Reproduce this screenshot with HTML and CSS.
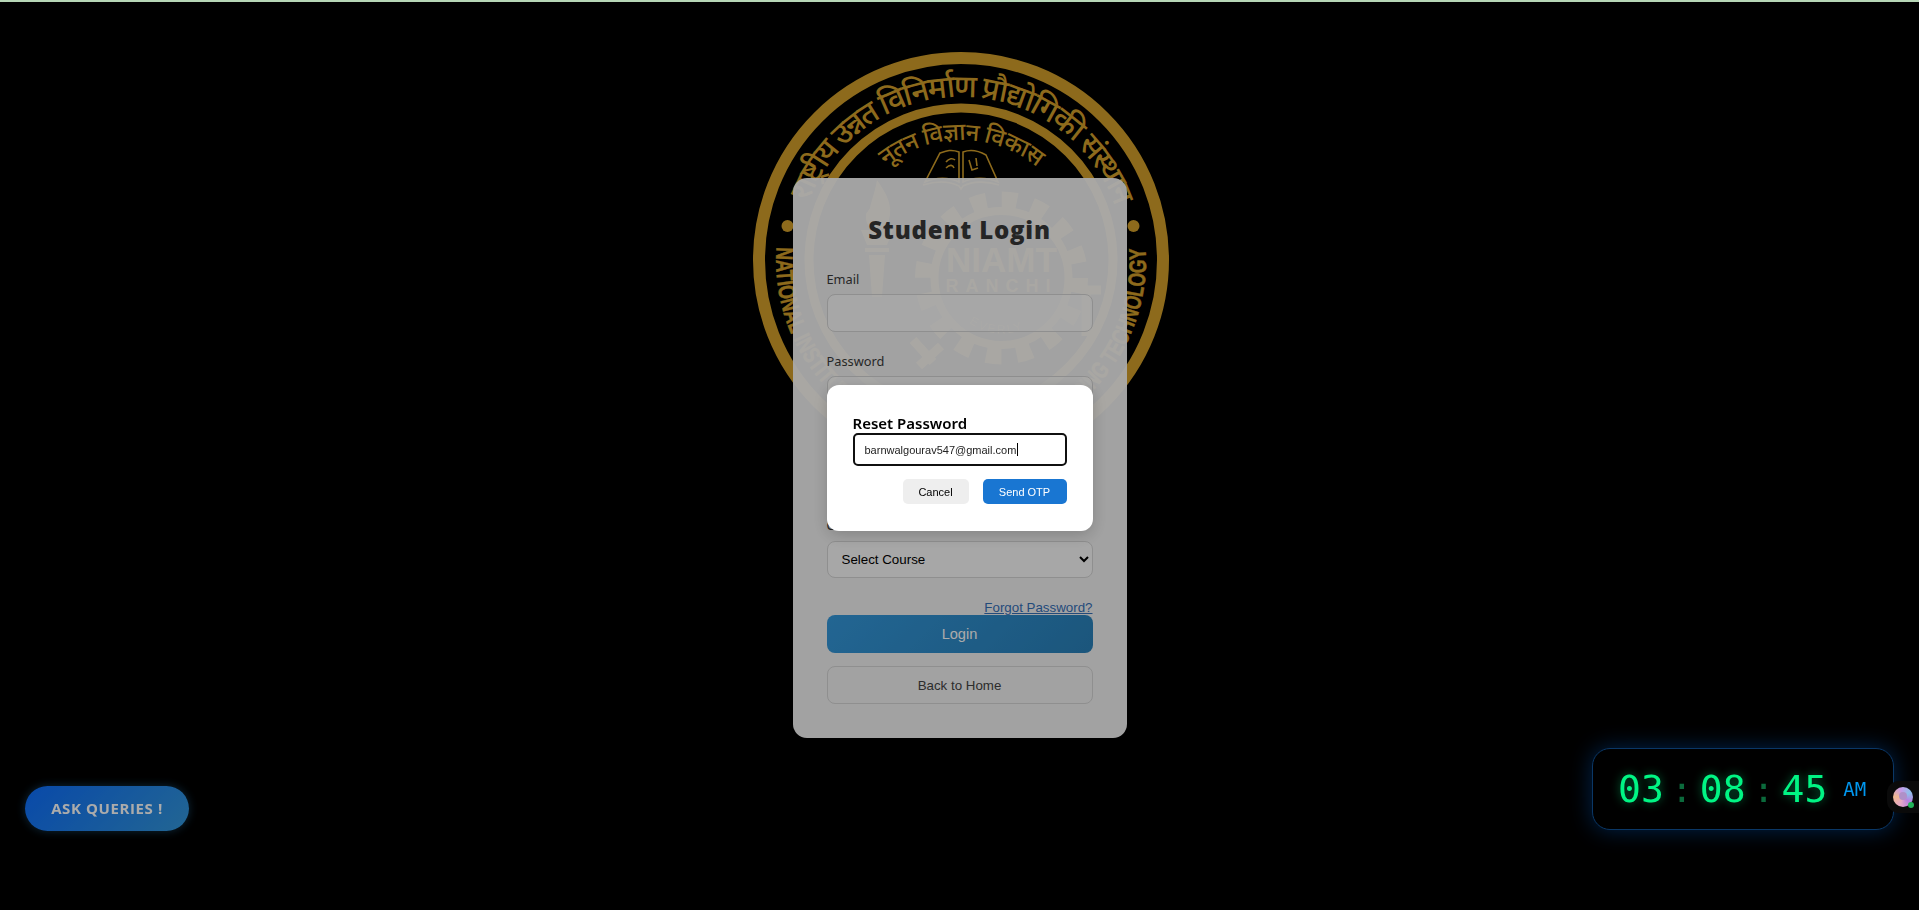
FILE: index.html
```html
<!DOCTYPE html>
<html lang="en">
<head>
<meta charset="utf-8">
<title>Student Login</title>
<link rel="stylesheet" href="styles.css">
</head>
<body>
<div class="topbar"></div>
<main class="page">
  <svg class="emblem" viewBox="0 0 440 440" width="440" height="440" aria-hidden="true">
    <defs>
      <path id="arcHindiOuter" d="M66.8 164.3A163 163 0 0 1 373.2 164.3"/>
      <path id="arcHindiInner" d="M144.5 126.8A120 120 0 0 1 295.5 126.8"/>
      <path id="arcEnglish" d="M35.5 207A185 185 0 1 0 404.5 207"/>
      <path id="arcGear" d="M205 238A55 55 0 0 0 316 238"/>
    </defs>
    <circle class="ring-outer" cx="220" cy="220" r="202"/>
    <circle class="ring-inner" cx="220" cy="220" r="152"/>
    <circle class="dot" cx="46.5" cy="186" r="6"/>
    <circle class="dot" cx="392.5" cy="186" r="6"/>
    <text class="hi-outer"><textPath href="#arcHindiOuter" textLength="398">राष्ट्रीय उन्नत विनिर्माण प्रौद्योगिकी संस्थान</textPath></text>
    <text class="hi-inner"><textPath href="#arcHindiInner" textLength="163">नूतन विज्ञान विकास</textPath></text>
    <text class="en-arc"><textPath href="#arcEnglish" textLength="607" lengthAdjust="spacingAndGlyphs">NATIONAL INSTITUTE OF ADVANCED MANUFACTURING TECHNOLOGY</textPath></text>
    <g class="book">
      <path d="M218 112C210 109 205 111 199 113L184 142C195 137 208 137 218 142Z"/>
      <path d="M222 112C230 109 238 111 245 115L257 142C246 137 232 137 222 142Z"/>
      <path d="M182 145C195 141 208 141 218 146L220 149L222 146C232 141 246 141 258 145"/>
      <path d="M205 122C208 118 212 118 214 120M205 128C209 124 212 125 213 128M228 120L231 130L237 128M235 118L236 126"/>
    </g>
    <circle class="gear-teeth" cx="260.5" cy="238" r="78"/>
    <circle class="gear-hub" cx="260.5" cy="238" r="67"/>
    <g class="torch">
      <path d="M136 140C146 154 152 166 148 180C146 188 141 190 136 190C129 190 124 184 125 174C126 172 128 170 129 168C130 162 134 152 136 140Z"/>
      <path d="M120 190H152L146 205H126Z"/>
      <rect x="124" y="208" width="24" height="4"/>
      <path d="M128 215H144L141 257H131Z"/>
    </g>
    <path class="frame" d="M345 296V250H360"/>
    <path class="frame" d="M172 300L192 322M178 326L200 306"/>
    <text class="gear-title" x="260.5" y="232" text-anchor="middle">NIAMT</text>
    <text class="gear-sub" x="260.5" y="252" text-anchor="middle">RANCHI</text>
    <text class="gear-motto"><textPath href="#arcGear" startOffset="30%">EVERLY</textPath></text>
  </svg>

  <form class="card">
    <h1 class="card-title">Student Login</h1>
    <div class="group">
      <label class="label">Email</label>
      <div class="control"></div>
    </div>
    <div class="group">
      <label class="label">Password</label>
      <div class="control"></div>
    </div>
    <div class="group">
      <label class="label">Roll Number</label>
      <div class="control"></div>
    </div>
    <div class="group">
      <label class="label">Course</label>
      <select class="control select"><option>Select Course</option></select>
    </div>
    <div class="forgot-row"><a class="forgot" href="#">Forgot Password?</a></div>
    <button class="btn-login" type="button">Login</button>
    <button class="btn-home" type="button">Back to Home</button>
  </form>
</main>

<button class="ask" type="button">ASK QUERIES !</button>

<div class="overlay">
  <div class="modal">
    <h2 class="modal-title">Reset Password</h2>
    <div class="modal-field" role="textbox">barnwalgourav547@gmail.com<span class="caret"></span></div>
    <div class="modal-actions">
      <button class="btn-cancel" type="button">Cancel</button>
      <button class="btn-send" type="button">Send OTP</button>
    </div>
  </div>
</div>

<div class="clock">
  <span class="digits">03</span><span class="colon">:</span><span class="digits">08</span><span class="colon">:</span><span class="digits">45</span><span class="ampm">AM</span>
</div>
<div class="assistant"><span class="avatar"><span class="eyes"></span></span><span class="online"></span></div>
</body>
</html>
```
FILE: styles.css
```css
* { box-sizing: border-box; }
html, body { margin: 0; height: 100%; }
body { background: #000; overflow: hidden; font-family: "Liberation Sans", Arial, sans-serif; }

.topbar { position: relative; z-index: 3; height: 2px; background: #b6d6b6; }
.page { position: relative; display: flex; justify-content: center; padding-top: 176px; }

.emblem { position: absolute; left: 740.5px; top: 38px; }
.ring-outer { fill: none; stroke: #d29f2a; stroke-width: 12; }
.ring-inner { fill: none; stroke: #d29f2a; stroke-width: 9; }
.dot { fill: #d29f2a; }
.hi-outer, .hi-inner { fill: #d29f2a; font-family: "Noto Sans Devanagari", "Noto Sans", "DejaVu Sans", sans-serif; font-weight: 500; }
.hi-outer { font-size: 31px; }
.hi-inner { font-size: 24px; }
.en-arc { fill: #d29f2a; stroke: #d29f2a; stroke-width: .5; font-family: "Liberation Sans", sans-serif; font-weight: 700; font-size: 24px; }
.book path { fill: none; stroke: #d29f2a; stroke-width: 1.6; }
.gear-teeth { fill: none; stroke: #d29f2a; stroke-width: 17; stroke-dasharray: 15.3 15.3; }
.gear-hub { fill: none; stroke: #d29f2a; stroke-width: 8; }
.torch path, .torch rect { fill: #d29f2a; }
.frame { fill: none; stroke: #d29f2a; stroke-width: 9; }
.gear-title { fill: #d29f2a; font-family: "Liberation Sans", sans-serif; font-weight: 700; font-size: 35px; }
.gear-sub { fill: #d29f2a; font-family: "Liberation Sans", sans-serif; font-weight: 700; font-size: 18px; letter-spacing: 7px; }
.gear-motto { fill: #d29f2a; font-family: "Liberation Sans", sans-serif; font-size: 12px; letter-spacing: 2px; }

.card {
  position: relative;
  width: 334px;
  height: 560px;
  padding: 34px 34px 0;
  background: rgba(255, 255, 255, .95);
  border-radius: 14px;
}
.card-title {
  margin: 0 0 24px;
  height: 36px;
  text-align: center;
  font: 800 24px/36px "Open Sans", sans-serif;
  letter-spacing: .8px;
  color: #383838;
}
.group { height: 82px; display: flex; flex-direction: column; }
.label {
  height: 22px;
  font: 400 12.8px/14px "Noto Sans", sans-serif;
  color: #3a3a3a;
}
.control {
  display: block;
  width: 100%;
  height: 38px;
  border: 1px solid #d5d5d5;
  border-radius: 8px;
  background: rgba(255, 255, 255, .5);
}
.select {
  height: 37px;
  margin-top: 1px;
  padding: 0 10px;
  font: 13.33px "Liberation Sans", sans-serif;
  color: #000;
}
.forgot-row { height: 15px; text-align: right; line-height: 13px; }
.forgot { font-size: 13.33px; color: #3570b8; }
.btn-login {
  display: block;
  width: 100%;
  height: 38px;
  border: 0;
  border-radius: 8px;
  background: linear-gradient(135deg, #3498db, #2980b9);
  color: #fff;
  font: 14.6px "Liberation Sans", sans-serif;
}
.btn-home {
  display: block;
  width: 100%;
  height: 38px;
  margin-top: 13px;
  border: 1px solid #d5d5d5;
  border-radius: 8px;
  background: transparent;
  color: #444;
  font: 13.33px "Liberation Sans", sans-serif;
}

.ask {
  position: fixed;
  left: 25px;
  top: 786px;
  width: 164px;
  height: 45px;
  padding-bottom: 2px;
  border: 0;
  border-radius: 23px;
  background: linear-gradient(135deg, #0d6efd, #3498db);
  box-shadow: 0 0 10px rgba(52, 152, 219, .4);
  color: #fff;
  font: 700 15px "Open Sans", sans-serif;
  letter-spacing: .6px;
}

.overlay {
  position: fixed;
  inset: 0;
  padding-top: 6px;
  display: flex;
  align-items: center;
  justify-content: center;
  background: rgba(0, 0, 0, .33);
}
.modal {
  width: 266px;
  height: 146px;
  padding: 28px 26px 0;
  background: #fff;
  border-radius: 12px;
  box-shadow: 0 4px 16px rgba(0, 0, 0, .2);
}
.modal-title {
  margin: 0;
  height: 20px;
  font: 600 15px/20px "Noto Sans", sans-serif;
  color: #000;
}
.modal-field {
  display: flex;
  align-items: center;
  width: 214px;
  height: 33px;
  padding-left: 10px;
  border: 2px solid #101010;
  border-radius: 5px;
  font-size: 11px;
  color: #222;
}
.caret { width: 1px; height: 13px; margin-left: 1px; background: #000; }
.modal-actions { display: flex; justify-content: flex-end; gap: 14px; margin-top: 13px; }
.btn-cancel, .btn-send {
  height: 25px;
  border: 0;
  border-radius: 5px;
  font: 11px "Liberation Sans", sans-serif;
}
.btn-cancel { width: 66px; background: #eee; color: #000; }
.btn-send { width: 84px; background: #1976d2; color: #fff; }

.clock {
  position: fixed;
  left: 1592px;
  top: 748px;
  width: 302px;
  height: 82px;
  padding-left: 25px;
  display: flex;
  align-items: center;
  background: #000;
  border: 1px solid #0a3766;
  border-radius: 18px;
  box-shadow: 0 0 22px rgba(0, 120, 255, .3);
  font-family: "DejaVu Sans Mono", monospace;
}
.digits { font-size: 38px; color: #00f584; text-shadow: 0 0 10px rgba(0, 245, 132, .45); }
.colon { width: 36px; text-align: center; font-size: 36px; color: #0b6a3c; }
.ampm { margin-left: 16px; font-size: 19px; color: #0096ee; }

.assistant {
  position: fixed;
  right: 0;
  top: 781px;
  width: 32px;
  height: 32px;
  padding: 6px;
  background: #0a0a0a;
  border-radius: 12px 0 0 12px;
}
.avatar {
  position: relative;
  display: block;
  width: 20px;
  height: 20px;
  border-radius: 50%;
  background: conic-gradient(from 200deg, #e6a8c8, #f0b890, #c79ae8, #8fc0ea, #b880e0, #e6a8c8);
}
.eyes { position: absolute; left: 6px; top: 5px; width: 8px; height: 8px; border-radius: 50%; background: #b090c8; }
.online { position: absolute; left: 21px; top: 21px; width: 6px; height: 6px; border-radius: 50%; background: #22b45a; }
```
